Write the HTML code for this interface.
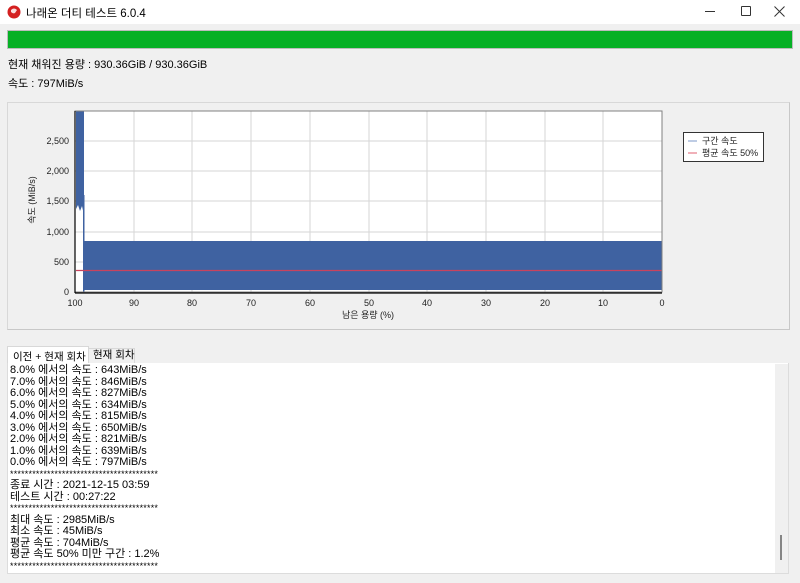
<!DOCTYPE html>
<html><head><meta charset="utf-8"><style>
*{margin:0;padding:0;box-sizing:border-box}
body{width:800px;height:583px;background:#f0f0f0;font-family:"Liberation Sans","Noto Sans CJK KR",sans-serif;font-size:11px;color:#000;position:relative;overflow:hidden}
.title{position:absolute;left:0;top:0;width:800px;height:24px;background:#fff}
.abs{position:absolute;white-space:nowrap}
.log div{height:11.5px;line-height:11.5px}
.st{font-size:9px;letter-spacing:0.2px;height:11.5px}
</style></head><body>
<div class="title">
<svg class="abs" style="left:7px;top:5px" width="14" height="14"><circle cx="7" cy="7" r="6.5" fill="#d42020"/><path d="M4 5 Q7 2 10 5 L8 8 Q6 9 4 7Z" fill="#fff" opacity=".85"/></svg>
<div class="abs" style="left:26px;top:5px;font-size:11.5px">나래온 더티 테스트 6.0.4</div>
<div class="abs" style="left:705px;top:11px;width:10px;height:1px;background:#333"></div>
<div class="abs" style="left:741px;top:6px;width:10px;height:10px;border:1px solid #333;border-radius:1px"></div>
<svg class="abs" style="left:774px;top:6px" width="11" height="11"><path d="M0.5 0.5L10.5 10.5M10.5 0.5L0.5 10.5" stroke="#333" stroke-width="1"/></svg>
</div>
<div class="abs" style="left:7px;top:30px;width:786px;height:19px;background:#06b025;border:1px solid #bcbcbc"></div>
<div class="abs" style="left:8px;top:56px">현재 채워진 용량 : 930.36GiB / 930.36GiB</div>
<div class="abs" style="left:8px;top:75px">속도 : 797MiB/s</div>
<div class="abs" style="left:7px;top:102px;width:783px;height:228px;border:1px solid #d8d8d8;border-right-color:#c8c8c8;border-bottom-color:#c8c8c8"></div>
<svg class="abs" style="left:0;top:0" width="800" height="340" font-family="Liberation Sans,Noto Sans CJK KR,sans-serif" font-size="9">
<rect x="75" y="111" width="587" height="181" fill="#fff"/>
<g stroke="#d6d6d6" stroke-width="1">
<line x1="134" y1="111" x2="134" y2="292"/><line x1="192" y1="111" x2="192" y2="292"/><line x1="251" y1="111" x2="251" y2="292"/><line x1="310" y1="111" x2="310" y2="292"/><line x1="369" y1="111" x2="369" y2="292"/><line x1="427" y1="111" x2="427" y2="292"/><line x1="486" y1="111" x2="486" y2="292"/><line x1="545" y1="111" x2="545" y2="292"/><line x1="603" y1="111" x2="603" y2="292"/>
<line x1="75" y1="262" x2="662" y2="262"/><line x1="75" y1="232" x2="662" y2="232"/><line x1="75" y1="201" x2="662" y2="201"/><line x1="75" y1="171" x2="662" y2="171"/><line x1="75" y1="141" x2="662" y2="141"/>
</g>
<path d="M76 111 L84 111 L84 215 L82 206 L80 211 L78 205 L76 209Z" fill="#3f62a1"/>
<rect x="83" y="195" width="1.5" height="97" fill="#3f62a1"/>
<rect x="83" y="241" width="579" height="49" fill="#3f62a1"/>
<line x1="76" y1="270.5" x2="662" y2="270.5" stroke="#c9435e" stroke-width="1.3"/>
<rect x="75" y="111" width="587" height="181" fill="none" stroke="#808080"/>
<line x1="75" y1="111" x2="75" y2="293" stroke="#000" stroke-width="1.2"/>
<line x1="75" y1="293" x2="662" y2="293" stroke="#000" stroke-width="1.2"/>
<g text-anchor="end" fill="#222"><text x="69" y="295">0</text><text x="69" y="265">500</text><text x="69" y="235">1,000</text><text x="69" y="204">1,500</text><text x="69" y="174">2,000</text><text x="69" y="144">2,500</text></g>
<g text-anchor="middle" fill="#222"><text x="75" y="306">100</text><text x="134" y="306">90</text><text x="192" y="306">80</text><text x="251" y="306">70</text><text x="310" y="306">60</text><text x="369" y="306">50</text><text x="427" y="306">40</text><text x="486" y="306">30</text><text x="545" y="306">20</text><text x="603" y="306">10</text><text x="662" y="306">0</text>
<text x="368" y="318">남은 용량 (%)</text>
<text transform="translate(35,200) rotate(-90)">속도 (MiB/s)</text></g>
<rect x="683.5" y="132.5" width="80" height="29" fill="#fff" stroke="#333"/>
<line x1="688" y1="141" x2="697" y2="141" stroke="#7d9ac8"/>
<line x1="688" y1="153" x2="697" y2="153" stroke="#e06070"/>
<text x="702" y="144" fill="#222">구간 속도</text>
<text x="702" y="156" fill="#222">평균 속도 50%</text>
</svg>
<div class="abs" style="left:88px;top:348px;width:47px;height:15px;background:#f0f0f0;border:1px solid #d8d8d8;border-bottom:none;padding:0 0 0 4px;line-height:13px;font-size:10.5px">현재 회차</div>
<div class="abs" style="left:7px;top:346px;width:82px;height:18px;background:#fff;border:1px solid #d8d8d8;border-bottom:none;padding:2px 0 0 5px;font-size:10.5px">이전 + 현재 회차</div>
<div class="abs" style="left:7px;top:363px;width:782px;height:211px;background:#fff;border:1px solid #dcdcdc;border-top:none"></div>
<div class="abs" style="left:775px;top:364px;width:13px;height:209px;background:#f0f0f0"></div>
<div class="abs" style="left:780px;top:535px;width:2px;height:25px;background:#858585"></div>
<div class="abs log" style="left:10px;top:365px">
<div>8.0% 에서의 속도 : 643MiB/s</div><div>7.0% 에서의 속도 : 846MiB/s</div><div>6.0% 에서의 속도 : 827MiB/s</div><div>5.0% 에서의 속도 : 634MiB/s</div><div>4.0% 에서의 속도 : 815MiB/s</div><div>3.0% 에서의 속도 : 650MiB/s</div><div>2.0% 에서의 속도 : 821MiB/s</div><div>1.0% 에서의 속도 : 639MiB/s</div><div>0.0% 에서의 속도 : 797MiB/s</div>
<div class="st">****************************************</div>
<div>종료 시간 : 2021-12-15 03:59</div><div>테스트 시간 : 00:27:22</div>
<div class="st">****************************************</div>
<div>최대 속도 : 2985MiB/s</div><div>최소 속도 : 45MiB/s</div><div>평균 속도 : 704MiB/s</div><div>평균 속도 50% 미만 구간 : 1.2%</div>
<div class="st">****************************************</div>
</div>
</body></html>
